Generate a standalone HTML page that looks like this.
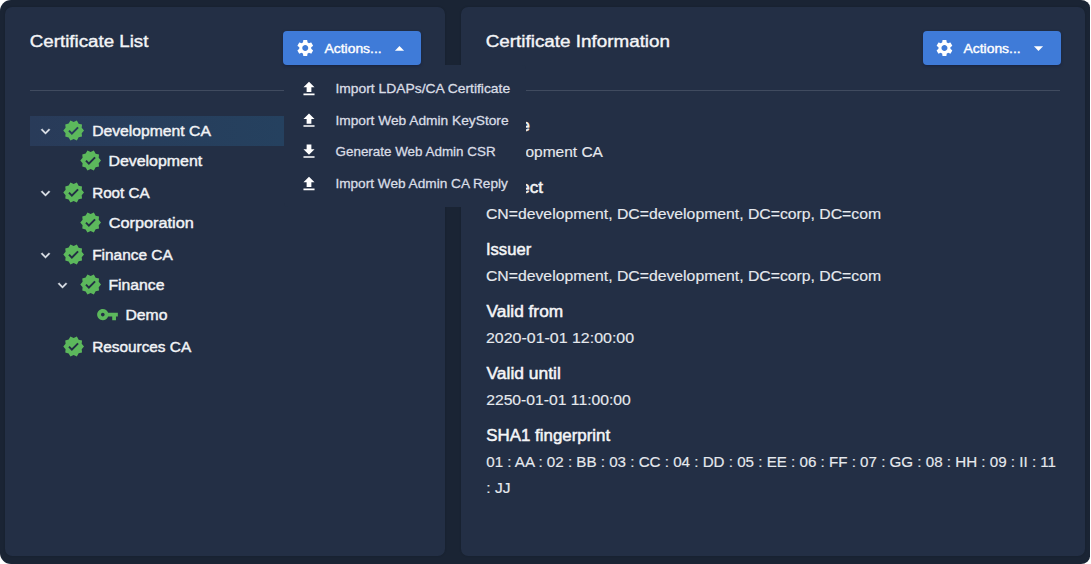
<!DOCTYPE html>
<html lang="en">
<head>
<meta charset="utf-8">
<title>Certificates</title>
<style>
*{box-sizing:border-box;margin:0;padding:0}
html,body{width:1091px;height:564px;background:#fff;overflow:hidden}
body{font-family:"Liberation Sans",sans-serif;color:#f1f3f6;position:relative}
.frame{position:absolute;left:0;top:0;width:1089.7px;height:564px;background:#1a2434;border-radius:11px 9px 9px 11px / 11px 7.5px 7.5px 11px;overflow:hidden}
.panel{position:absolute;top:7px;height:549px;background:#232f45;border-radius:7px;box-shadow:0 0 2px rgba(0,0,0,.2)}
ul,li{list-style:none}
h2,dt,dd{font-weight:400}
.panel.left{left:5px;width:440px}
.panel.right{left:461px;width:623.6px}
.tx{position:absolute;white-space:nowrap;line-height:20px;height:20px;transform-origin:0 50%}
.title{font-size:17.3px;color:#f4f5f7;-webkit-text-stroke:0.4px #f4f5f7}
.bl{font-size:13.6px;color:#fff;-webkit-text-stroke:0.4px #fff}
.mi{font-size:13.6px;color:#d9dde5;-webkit-text-stroke:0.3px #d9dde5}
.row{font-size:15.5px;color:#f1f3f6;-webkit-text-stroke:0.45px #f1f3f6}
.lab{font-size:16.7px;color:#f4f5f7;-webkit-text-stroke:0.5px #f4f5f7}
.val{font-size:15.5px;color:#e6e9ee;-webkit-text-stroke:0.15px #e6e9ee}
.btn{position:absolute;display:block;top:24px;height:34px;width:138px;border:0;font:inherit;color:inherit;background:#3f7bd8;border-radius:4px;box-shadow:0 1px 3px rgba(8,20,60,.45);z-index:6}
.hr{position:absolute;top:83px;height:1px;border:0;background:#404b5f}
.sel{position:absolute;width:253.5px;height:30px;background:linear-gradient(90deg,#293b59,#25415f)}
.ico{position:absolute}
.menu{position:absolute;left:279px;top:58px;width:241.5px;height:142px;background:#232f45;border-radius:4px;z-index:5}
</style>
</head>
<body>
<main class="frame">
<section class="panel left" aria-label="Certificate List">
<header>
<h2 id="t1" class="tx title" style="left:24px;top:24px;transform:translateX(0.82px) scaleX(1.0829)">Certificate List</h2>
<button class="btn" type="button" aria-haspopup="menu" aria-expanded="true" style="left:278px">
  <svg class="ico" style="left:12px;top:7px" width="21" height="21" viewBox="-0.300 -0.060 25.200 25.200" fill="#fff" aria-hidden="true"><path d="M19.14 12.94c.04-.3.06-.61.06-.94 0-.32-.02-.64-.07-.94l2.03-1.58c.18-.14.23-.41.12-.61l-1.92-3.32c-.12-.22-.37-.29-.59-.22l-2.39.96c-.5-.38-1.03-.7-1.62-.94l-.36-2.54c-.04-.24-.24-.41-.48-.41h-3.84c-.24 0-.43.17-.47.41l-.36 2.54c-.59.24-1.13.57-1.62.94l-2.39-.96c-.22-.08-.47 0-.59.22L2.74 8.87c-.12.21-.08.47.12.61l2.03 1.58c-.05.3-.09.63-.09.94s.02.64.07.94l-2.03 1.58c-.18.14-.23.41-.12.61l1.92 3.32c.12.22.37.29.59.22l2.39-.96c.5.38 1.03.7 1.62.94l.36 2.54c.05.24.24.41.48.41h3.84c.24 0 .44-.17.47-.41l.36-2.54c.59-.24 1.13-.56 1.62-.94l2.39.96c.22.08.47 0 .59-.22l1.92-3.32c.12-.22.07-.47-.12-.61l-2.01-1.58zM12 15.6c-1.98 0-3.6-1.62-3.6-3.6s1.62-3.6 3.6-3.6 3.6 1.62 3.6 3.6-1.62 3.6-3.6 3.6z"/></svg>
  <span id="b1" class="tx bl" style="left:41px;top:8px;transform:translateX(0.46px) scaleX(1.0233)">Actions...</span>
  <svg class="ico" style="left:105px;top:6px" width="23" height="23" viewBox="-0.545 -0.873 25.091 25.091" fill="#fff" aria-hidden="true"><path d="M7 14l5-5 5 5z"/></svg>
</button>
<ul class="menu" role="menu">
  <li role="menuitem"><svg class="ico" style="left:15px;top:14px" width="20" height="20" viewBox="-0.632 -0.379 25.263 25.263" fill="#fff" aria-hidden="true"><path d="M9 16h6v-6h4l-7-7-7 7h4zm-4 2h14v2H5z"/></svg><span id="m1" class="tx mi" style="left:51px;top:14px;transform:translateX(0.47px) scaleX(1.0183)">Import LDAPs/CA Certificate</span></li>
  <li role="menuitem"><svg class="ico" style="left:15px;top:46px" width="20" height="19" viewBox="-0.632 -0.000 25.263 24.000" fill="#fff" aria-hidden="true"><path d="M9 16h6v-6h4l-7-7-7 7h4zm-4 2h14v2H5z"/></svg><span id="m2" class="tx mi" style="left:51px;top:46px;transform:translateX(0.39px) scaleX(1.0113)">Import Web Admin KeyStore</span></li>
  <li role="menuitem"><svg class="ico" style="left:15px;top:77px" width="20" height="19" viewBox="-0.632 -0.000 25.263 24.000" fill="#fff" aria-hidden="true"><path d="M19 9h-4V3H9v6H5l7 7 7-7zM5 18v2h14v-2H5z"/></svg><span id="m3" class="tx mi" style="left:51px;top:77px;transform:translateX(0.56px) scaleX(0.9866)">Generate Web Admin CSR</span></li>
  <li role="menuitem"><svg class="ico" style="left:15px;top:109px" width="20" height="20" viewBox="-0.632 -0.379 25.263 25.263" fill="#fff" aria-hidden="true"><path d="M9 16h6v-6h4l-7-7-7 7h4zm-4 2h14v2H5z"/></svg><span id="m4" class="tx mi" style="left:51px;top:109px;transform:translateX(0.38px) scaleX(1.0029)">Import Web Admin CA Reply</span></li>
</ul>
</header>
<hr class="hr" style="left:25px;width:391px">
<ul class="tree" role="tree">
  <li role="treeitem" aria-level="1" aria-selected="true"><span class="sel" style="left:25px;top:109px"></span><svg class="ico" style="left:31px;top:115px" width="19" height="19" viewBox="-0.667 -0.400 25.333 25.333" fill="#dfe3ea" stroke="#dfe3ea" stroke-width="0.5" stroke-linejoin="round" aria-hidden="true"><path d="M16.59 8.59L12 13.17 7.41 8.59 6 10l6 6 6-6z"/></svg><svg class="ico" style="left:57px;top:112px" width="23" height="23" viewBox="-0.372 -0.212 24.425 24.425" fill="#5cb85c" aria-hidden="true"><path d="M23 12l-2.44-2.79.34-3.69-3.61-.82-1.89-3.2L12 2.960 8.600 1.500 6.710 4.690 3.100 5.500l.34 3.700L1 12l2.440 2.790-.34 3.700 3.610.82L8.600 22.500l3.400-1.470 3.400 1.460 1.890-3.190 3.610-.82-.34-3.690L23 12zm-12.910 4.720l-3.800-3.810 1.480-1.480 2.320 2.330 5.850-5.870 1.480 1.480-7.330 7.350z"/></svg><span id="r1" class="tx row" style="left:87px;top:114px;transform:translateX(0.17px) scaleX(1.0130)">Development CA</span></li>
  <li role="treeitem" aria-level="2"><svg class="ico" style="left:74px;top:142px" width="23" height="23" viewBox="-0.372 -0.212 24.425 24.425" fill="#5cb85c" aria-hidden="true"><path d="M23 12l-2.44-2.79.34-3.69-3.61-.82-1.89-3.2L12 2.960 8.600 1.500 6.710 4.690 3.100 5.500l.34 3.700L1 12l2.440 2.790-.34 3.700 3.610.82L8.600 22.500l3.400-1.470 3.400 1.460 1.890-3.190 3.610-.82-.34-3.690L23 12zm-12.910 4.720l-3.800-3.810 1.480-1.480 2.320 2.330 5.850-5.870 1.480 1.480-7.330 7.350z"/></svg><span id="r2" class="tx row" style="left:103px;top:144px;transform:translateX(0.39px) scaleX(1.0275)">Development</span></li>
  <li role="treeitem" aria-level="1"><svg class="ico" style="left:31px;top:177px" width="19" height="19" viewBox="-0.667 -0.400 25.333 25.333" fill="#dfe3ea" stroke="#dfe3ea" stroke-width="0.5" stroke-linejoin="round" aria-hidden="true"><path d="M16.59 8.59L12 13.17 7.41 8.59 6 10l6 6 6-6z"/></svg><svg class="ico" style="left:57px;top:174px" width="23" height="23" viewBox="-0.372 -0.212 24.425 24.425" fill="#5cb85c" aria-hidden="true"><path d="M23 12l-2.44-2.79.34-3.69-3.61-.82-1.89-3.2L12 2.960 8.600 1.500 6.710 4.690 3.100 5.500l.34 3.700L1 12l2.440 2.790-.34 3.700 3.610.82L8.600 22.500l3.400-1.470 3.400 1.460 1.890-3.190 3.610-.82-.34-3.690L23 12zm-12.910 4.720l-3.800-3.810 1.480-1.480 2.320 2.330 5.850-5.870 1.480 1.480-7.330 7.350z"/></svg><span id="r3" class="tx row" style="left:87px;top:176px;transform:translateX(0.15px) scaleX(0.9810)">Root CA</span></li>
  <li role="treeitem" aria-level="2"><svg class="ico" style="left:74px;top:204px" width="23" height="23" viewBox="-0.372 -0.212 24.425 24.425" fill="#5cb85c" aria-hidden="true"><path d="M23 12l-2.44-2.79.34-3.69-3.61-.82-1.89-3.2L12 2.960 8.600 1.500 6.710 4.690 3.100 5.500l.34 3.700L1 12l2.440 2.790-.34 3.700 3.610.82L8.600 22.500l3.400-1.470 3.400 1.460 1.890-3.190 3.610-.82-.34-3.690L23 12zm-12.910 4.720l-3.800-3.810 1.480-1.480 2.320 2.330 5.850-5.870 1.480 1.480-7.330 7.350z"/></svg><span id="r4" class="tx row" style="left:103px;top:206px;transform:translateX(0.74px) scaleX(1.0499)">Corporation</span></li>
  <li role="treeitem" aria-level="1"><svg class="ico" style="left:31px;top:239px" width="19" height="19" viewBox="-0.667 -0.400 25.333 25.333" fill="#dfe3ea" stroke="#dfe3ea" stroke-width="0.5" stroke-linejoin="round" aria-hidden="true"><path d="M16.59 8.59L12 13.17 7.41 8.59 6 10l6 6 6-6z"/></svg><svg class="ico" style="left:57px;top:236px" width="23" height="23" viewBox="-0.372 -0.212 24.425 24.425" fill="#5cb85c" aria-hidden="true"><path d="M23 12l-2.44-2.79.34-3.69-3.61-.82-1.89-3.2L12 2.960 8.600 1.500 6.710 4.690 3.100 5.500l.34 3.700L1 12l2.440 2.790-.34 3.700 3.610.82L8.600 22.500l3.400-1.470 3.400 1.460 1.890-3.190 3.610-.82-.34-3.690L23 12zm-12.910 4.720l-3.800-3.810 1.480-1.480 2.320 2.330 5.850-5.870 1.480 1.480-7.330 7.350z"/></svg><span id="r5" class="tx row" style="left:87px;top:238px;transform:translateX(0.17px) scaleX(0.9946)">Finance CA</span></li>
  <li role="treeitem" aria-level="2"><svg class="ico" style="left:48px;top:269px" width="19" height="19" viewBox="-0.667 -0.400 25.333 25.333" fill="#dfe3ea" stroke="#dfe3ea" stroke-width="0.5" stroke-linejoin="round" aria-hidden="true"><path d="M16.59 8.59L12 13.17 7.41 8.59 6 10l6 6 6-6z"/></svg><svg class="ico" style="left:74px;top:266px" width="23" height="23" viewBox="-0.372 -0.212 24.425 24.425" fill="#5cb85c" aria-hidden="true"><path d="M23 12l-2.44-2.79.34-3.69-3.61-.82-1.89-3.2L12 2.960 8.600 1.500 6.710 4.690 3.100 5.500l.34 3.700L1 12l2.440 2.790-.34 3.700 3.610.82L8.600 22.500l3.400-1.470 3.400 1.460 1.890-3.190 3.610-.82-.34-3.690L23 12zm-12.910 4.720l-3.800-3.810 1.480-1.480 2.320 2.330 5.850-5.870 1.480 1.480-7.330 7.350z"/></svg><span id="r6" class="tx row" style="left:103px;top:268px;transform:translateX(0.40px) scaleX(1.0165)">Finance</span></li>
  <li role="treeitem" aria-level="3"><svg class="ico" style="left:91px;top:296px" width="23" height="23" viewBox="-0.212 -0.265 24.425 24.425" fill="#5cb85c" aria-hidden="true"><path d="M12.65 10C11.83 7.67 9.61 6 7 6c-3.310 0-6 2.690-6 6s2.690 6 6 6c2.610 0 4.830-1.670 5.650-4H17v4h4v-4h2v-4H12.650zM7 14c-1.100 0-2-.900-2-2s.900-2 2-2 2 .900 2 2-.900 2-2 2z"/></svg><span id="r7" class="tx row" style="left:120px;top:298px;transform:translateX(0.40px) scaleX(1.0153)">Demo</span></li>
  <li role="treeitem" aria-level="1"><svg class="ico" style="left:57px;top:328px" width="23" height="23" viewBox="-0.372 -0.212 24.425 24.425" fill="#5cb85c" aria-hidden="true"><path d="M23 12l-2.44-2.79.34-3.69-3.61-.82-1.89-3.2L12 2.960 8.600 1.500 6.710 4.690 3.100 5.500l.34 3.700L1 12l2.440 2.790-.34 3.700 3.610.82L8.600 22.500l3.400-1.470 3.400 1.460 1.890-3.190 3.610-.82-.34-3.690L23 12zm-12.910 4.720l-3.800-3.810 1.480-1.480 2.320 2.330 5.850-5.870 1.480 1.480-7.330 7.350z"/></svg><span id="r8" class="tx row" style="left:87px;top:330px;transform:translateX(0.13px) scaleX(0.9907)">Resources CA</span></li>
</ul>
</section>
<section class="panel right" aria-label="Certificate Information">
<header>
<h2 id="t2" class="tx title" style="left:24px;top:24px;transform:translateX(0.71px) scaleX(1.0903)">Certificate Information</h2>
<button class="btn" type="button" aria-haspopup="menu" aria-expanded="false" style="left:462px">
  <svg class="ico" style="left:11px;top:7px" width="21" height="21" viewBox="-0.540 -0.060 25.200 25.200" fill="#fff" aria-hidden="true"><path d="M19.14 12.94c.04-.3.06-.61.06-.94 0-.32-.02-.64-.07-.94l2.03-1.58c.18-.14.23-.41.12-.61l-1.92-3.32c-.12-.22-.37-.29-.59-.22l-2.39.96c-.5-.38-1.03-.7-1.62-.94l-.36-2.54c-.04-.24-.24-.41-.48-.41h-3.84c-.24 0-.43.17-.47.41l-.36 2.54c-.59.24-1.13.57-1.62.94l-2.39-.96c-.22-.08-.47 0-.59.22L2.74 8.87c-.12.21-.08.47.12.61l2.03 1.58c-.05.3-.09.63-.09.94s.02.64.07.94l-2.03 1.58c-.18.14-.23.41-.12.61l1.92 3.32c.12.22.37.29.59.22l2.39-.96c.5.38 1.03.7 1.62.94l.36 2.54c.05.24.24.41.48.41h3.84c.24 0 .44-.17.47-.41l.36-2.54c.59-.24 1.13-.56 1.62-.94l2.39.96c.22.08.47 0 .59-.22l1.92-3.32c.12-.22.07-.47-.12-.61l-2.01-1.58zM12 15.6c-1.98 0-3.6-1.62-3.6-3.6s1.62-3.6 3.6-3.6 3.6 1.62 3.6 3.6-1.62 3.6-3.6 3.6z"/></svg>
  <span id="b2" class="tx bl" style="left:40px;top:8px;transform:translateX(0.46px) scaleX(1.0233)">Actions...</span>
  <svg class="ico" style="left:104px;top:6px" width="23" height="23" viewBox="-0.545 -0.218 25.091 25.091" fill="#fff" aria-hidden="true"><path d="M7 10l5 5 5-5z"/></svg>
</button>
</header>
<hr class="hr" style="left:25px;width:574px">
<dl>
  <dt id="l1" class="tx lab" style="left:25px;top:109px;transform:translateX(0.06px) scaleX(0.9815)">Name</dt><dd id="v1" class="tx val" style="left:24px;top:135px;transform:translateX(0.90px) scaleX(0.9987)">Development CA</dd>
  <dt id="l2" class="tx lab" style="left:24px;top:171px;transform:translateX(0.94px) scaleX(1.0255)">Subject</dt><dd id="v2" class="tx val" style="left:24px;top:197px;transform:translateX(0.99px) scaleX(1.0169)">CN=development, DC=development, DC=corp, DC=com</dd>
  <dt id="l3" class="tx lab" style="left:24px;top:233px;transform:translateX(0.95px) scaleX(0.9957)">Issuer</dt><dd id="v3" class="tx val" style="left:24px;top:259px;transform:translateX(0.99px) scaleX(1.0169)">CN=development, DC=development, DC=corp, DC=com</dd>
  <dt id="l4" class="tx lab" style="left:25px;top:295px;transform:translateX(0.60px) scaleX(1.0361)">Valid from</dt><dd id="v4" class="tx val" style="left:24px;top:321px;transform:translateX(0.97px) scaleX(1.0290)">2020-01-01 12:00:00</dd>
  <dt id="l5" class="tx lab" style="left:25px;top:357px;transform:translateX(0.48px) scaleX(1.0444)">Valid until</dt><dd id="v5" class="tx val" style="left:25px;top:383px;transform:translateX(0.17px) scaleX(1.0131)">2250-01-01 11:00:00</dd>
  <dt id="l6" class="tx lab" style="left:25px;top:419px;transform:translateX(0.20px) scaleX(1.0128)">SHA1 fingerprint</dt><dd id="v6" class="tx val" style="left:25px;top:445px;transform:translateX(0.20px) scaleX(0.9775)">01 : AA : 02 : BB : 03 : CC : 04 : DD : 05 : EE : 06 : FF : 07 : GG : 08 : HH : 09 : II : 11</dd><dd id="v7" class="tx val" style="left:25px;top:471px;transform:translateX(0.27px) scaleX(1.0062)">: JJ</dd>
</dl>
</section>
</main>
</body>
</html>
